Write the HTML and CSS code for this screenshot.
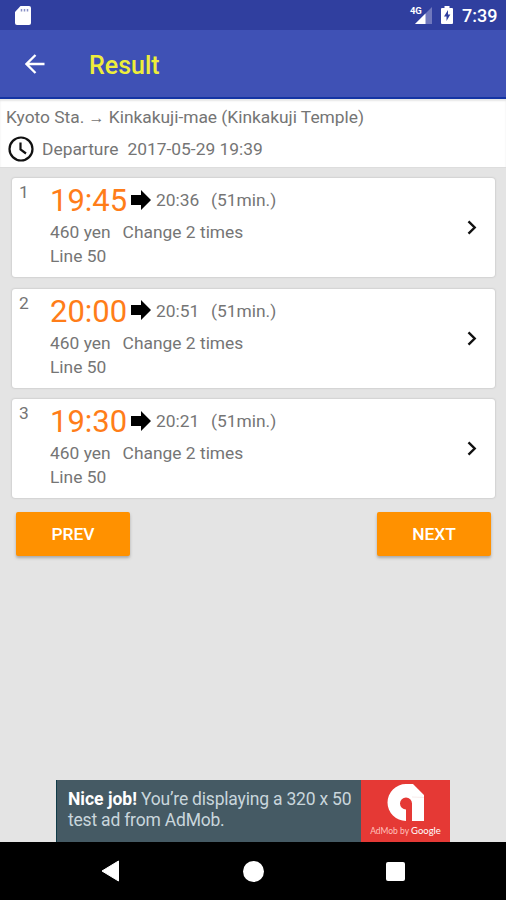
FILE: index.html
```html
<!DOCTYPE html>
<html lang="en">
<head>
<meta charset="utf-8">
<title>Result</title>
<link rel="stylesheet" href="styles.css">
</head>
<body>
<svg class="defs" width="0" height="0">
  <symbol id="go" viewBox="0 0 20 20"><path d="M0 5h10V0l10 10-10 10v-5H0z"/></symbol>
  <symbol id="chevron" viewBox="0 0 10 15"><path d="M1.5 1.3 7.7 7.5l-6.2 6.2" fill="none" stroke="#111" stroke-width="2.4"/></symbol>
</svg>
<div class="screen">
  <header class="status">
    <svg class="sd" viewBox="0 0 16 19"><path d="M5.500 0H14q2 0 2 2v15q0 2-2 2H2q-2 0-2-2V6z" fill="#fff"/><path d="M6.500 3v2.500M9.500 3v2.500M12.500 3v2.500" stroke="#8990c5" stroke-width="1.500"/></svg>
    <div class="status-right">
      <div class="signal"><span class="net">4G</span><svg viewBox="0 0 18 17"><path d="M18 0v17H1z" fill="#7078bd"/><path d="M11.500 6.500V17H1z" fill="#fff"/></svg></div>
      <svg class="battery" viewBox="0 0 12 18"><path d="M3.500 0h5v2H11q1 0 1 1v14q0 1-1 1H1q-1 0-1-1V3q0-1 1-1h2.500z" fill="#fff"/><path d="M7 4 3 10.500h2.500V15L9.300 8.500H7z" fill="#303f9f"/></svg>
      <span class="clock">7:39</span>
    </div>
  </header>
  <div class="appbar">
    <svg class="back" viewBox="0 0 20 20"><path d="M19.500 10H2M10.500 1 1.500 10l9 9" fill="none" stroke="#fff" stroke-width="2.300"/></svg>
    <h1>Result</h1>
  </div>
  <section class="query">
    <div class="route">Kyoto Sta. <span class="to">→</span> Kinkakuji-mae (Kinkakuji Temple)</div>
    <div class="departure">
      <svg viewBox="0 0 26 26"><circle cx="13" cy="13" r="11.500"/><path d="M12.500 6.500v7l5.500 4"/></svg>
      <span>Departure</span><span class="date">2017-05-29 19:39</span>
    </div>
  </section>
  <main>
    <article class="card">
      <span class="num">1</span>
      <div class="trip">
        <div class="times"><span class="start">19:45</span><svg><use href="#go"/></svg><span class="end">20:36</span><span class="length">(51min.)</span></div>
        <div class="line"><span class="fare">460 yen</span><span>Change 2 times</span></div>
        <div class="line">Line 50</div>
      </div>
      <svg class="chev"><use href="#chevron"/></svg>
    </article>
    <article class="card">
      <span class="num">2</span>
      <div class="trip">
        <div class="times"><span class="start">20:00</span><svg><use href="#go"/></svg><span class="end">20:51</span><span class="length">(51min.)</span></div>
        <div class="line"><span class="fare">460 yen</span><span>Change 2 times</span></div>
        <div class="line">Line 50</div>
      </div>
      <svg class="chev"><use href="#chevron"/></svg>
    </article>
    <article class="card">
      <span class="num">3</span>
      <div class="trip">
        <div class="times"><span class="start">19:30</span><svg><use href="#go"/></svg><span class="end">20:21</span><span class="length">(51min.)</span></div>
        <div class="line"><span class="fare">460 yen</span><span>Change 2 times</span></div>
        <div class="line">Line 50</div>
      </div>
      <svg class="chev"><use href="#chevron"/></svg>
    </article>
    <div class="pager"><button>PREV</button><button>NEXT</button></div>
  </main>
  <aside class="ad">
    <p><b>Nice job!</b> You’re displaying a 320 x 50<br>test ad from AdMob.</p>
    <div class="admob">
      <svg viewBox="0 0 38 38"><path d="M19 0h7l11 11v26H25V19.500a6 6 0 1 0-6 6V37a18.500 18.500 0 0 1 0-37z" fill="#fff"/><path d="M25 13l12 .5" stroke="#f3dedd" stroke-width=".6"/></svg>
      <span class="brand">AdMob by <b>Google</b></span>
    </div>
  </aside>
  <nav>
    <svg viewBox="0 0 20 22"><path d="M17.500 1v20L1 11z" fill="#fff" stroke="#fff" stroke-linejoin="round"/></svg>
    <span class="home"></span>
    <span class="recent"></span>
  </nav>
</div>
</body>
</html>
```
FILE: styles.css
```css
* { box-sizing: border-box; }
body { margin: 0; font-family: Roboto, "Liberation Sans", sans-serif; font-size: 17.4px; color: #757575; }
svg { display: block; flex: none; }
.defs { position: absolute; }
.screen { width: 506px; height: 900px; display: flex; flex-direction: column; background: #e4e4e4; overflow: hidden; }
.status { height: 30px; flex: none; background: #303f9f; display: flex; justify-content: space-between; align-items: center; padding: 0 9px 0 15px; color: #fff; }
.sd { width: 16px; height: 19px; }
.status-right { display: flex; align-items: center; }
.signal { position: relative; width: 22px; height: 18px; display: flex; justify-content: flex-end; align-items: flex-end; }
.signal svg { width: 18px; height: 17px; }
.net { position: absolute; left: 0; top: 0; font-size: 9.5px; line-height: 10px; font-weight: 700; letter-spacing: -.3px; }
.battery { width: 12px; height: 18px; margin-left: 9px; }
.clock { width: 35px; margin-left: 9px; font-size: 18px; font-weight: 500; line-height: 30px; padding-top: 2px; white-space: nowrap; }
.appbar { height: 69px; flex: none; background: #3f51b5; border-bottom: 2px solid #1434a4; display: flex; align-items: center; padding-left: 25px; }
.back { width: 20px; height: 20px; }
h1 { margin: 4px 0 0 44px; font-size: 25px; line-height: 30px; font-weight: 500; color: #eeee3b; }
.query { height: 69px; flex: none; background: #fff; border-bottom: 1px solid #ddd; padding: 7px 6px 0; box-shadow: inset 0 2px 2px #e6e6e6; }
.route { line-height: 22px; white-space: nowrap; letter-spacing: -.02px; }
.to { font-size: 16px; }
.departure { display: flex; align-items: center; height: 26px; margin-top: 7px; padding-left: 2px; line-height: 26px; }
.departure svg { width: 26px; height: 26px; margin-right: 8px; fill: none; stroke: #111; stroke-width: 2.2; }
.date { margin-left: 9px; }
main { flex: 1; padding: 10px 11px 0 12px; }
.card { height: 99px; margin-bottom: 11.6px; display: flex; background: #fff; border-radius: 3px; box-shadow: 0 0 2px #aaa; padding: 4px 18px 0 7px; }
.num { width: 31px; line-height: 20px; }
.trip { flex: 1; }
.times { height: 38px; display: flex; align-items: center; }
.times svg { width: 20px; height: 20px; margin: 0 0 3px 5px; fill: #000; }
.start { width: 76px; font-size: 31px; line-height: 38px; color: #ff7d19; white-space: nowrap; }
.end { width: 45px; margin: 0 0 2px 5px; }
.length { margin: 0 0 2px 10px; }
.line { display: flex; line-height: 24px; }
.fare { margin-right: 12px; }
.chev { width: 10px; height: 15px; margin-top: 38px; }
.pager { display: flex; justify-content: space-between; padding: 3px 4px 0; margin-top: -1px; }
button { width: 114px; height: 44px; border: 0; border-radius: 2px; background: #ff9100; color: #fff; font: 500 17.4px Roboto, sans-serif; box-shadow: 0 2px 3px #aaa; padding: 0; }
.ad { width: 394px; height: 62px; flex: none; margin-left: 56px; background: #455a64; border-left: 1px solid #103b48; display: flex; }
.ad p { width: 304px; margin: 0; padding: 9px 0 0 11px; font-size: 17.5px; line-height: 20.5px; letter-spacing: -.2px; color: #c9d6dc; white-space: nowrap; }
.ad b { color: #fff; letter-spacing: 0; }
.admob { flex: 1; background: #e53935; display: flex; flex-direction: column; align-items: center; }
.admob svg { width: 38px; height: 38px; margin-top: 4px; }
.brand { font: 8.5px/12px Lato, sans-serif; margin-top: 3px; color: #ffc2bd; white-space: nowrap; }
.brand b { font-size: 9.5px; font-weight: 400; }
nav { height: 58px; flex: none; background: #000; display: flex; justify-content: space-between; align-items: center; padding: 0 101px 0 101px; }
nav svg { width: 20px; height: 22px; }
.home { width: 21px; height: 21px; border-radius: 50%; background: #fff; }
.recent { width: 19px; height: 19px; border-radius: 2px; background: #fff; }
```
